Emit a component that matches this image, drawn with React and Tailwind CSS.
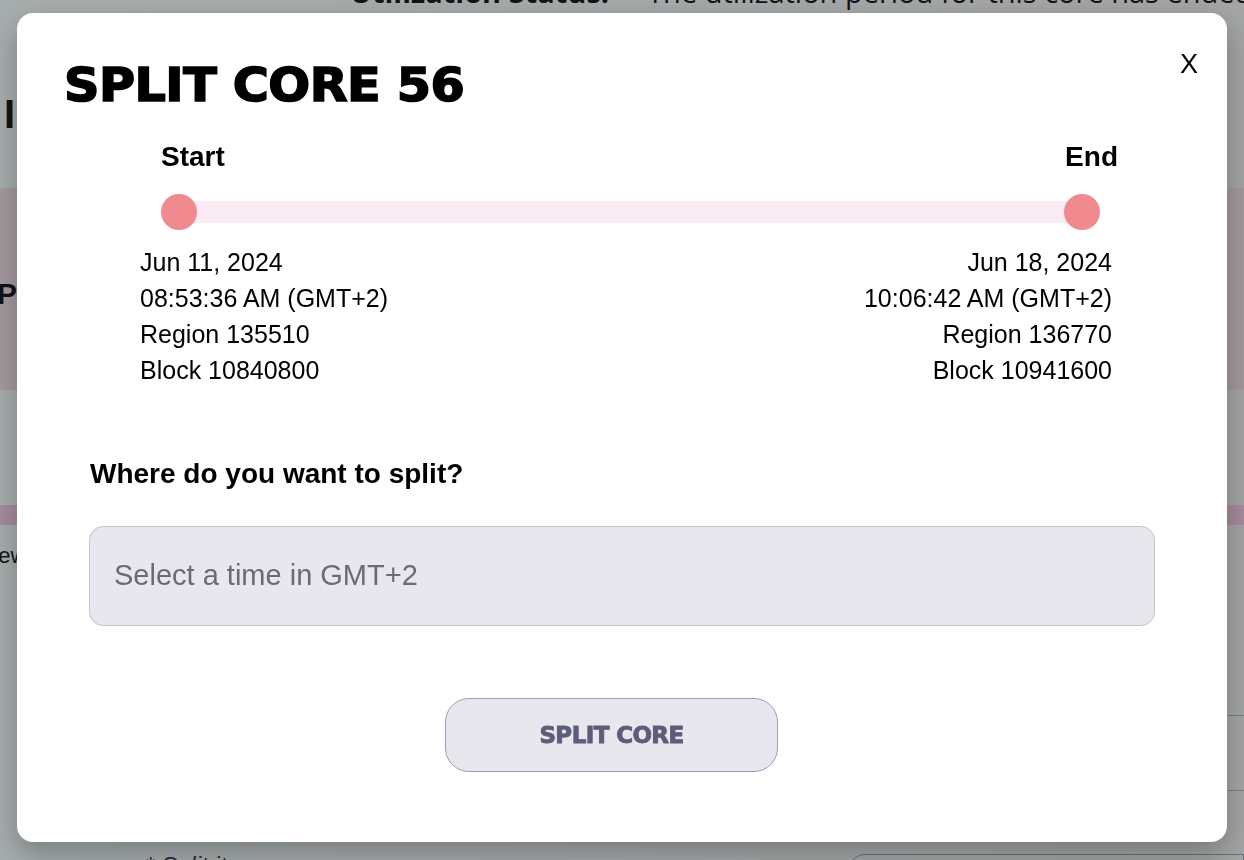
import React from 'react';

const startInfo = ['Jun 11, 2024', '08:53:36 AM (GMT+2)', 'Region 135510', 'Block 10840800'];
const endInfo = ['Jun 18, 2024', '10:06:42 AM (GMT+2)', 'Region 136770', 'Block 10941600'];

// --- dimmed page behind the dialog ---
const PageBehind = () => (
  <div className="h-screen w-full overflow-hidden bg-gradient-to-r from-[#a7aeae] to-[#a4a5a5] font-['Liberation_Sans',sans-serif] text-[#141414]">
    <div className="mt-[-19px] flex h-[32px] items-end gap-[38px] pl-[350px] whitespace-nowrap">
      <span className="font-['Open_Sans',sans-serif] text-[29px] font-bold">Utilization Status:</span>
      <span className="font-['Open_Sans',sans-serif] text-[29px]">The utilization period for this core has ended</span>
    </div>
    <div className="mt-[79px] h-[96px] pl-[4px] text-[40px] font-black leading-[44px]">I</div>
    <div className="flex h-[202px] items-center bg-[#a49a9f] text-[30px] font-black">
      <span className="-ml-[3px] mt-[8px]">P</span>
    </div>
    <div className="h-[115px]" />
    <div className="h-[20px] bg-[#a78c9d]" />
    <div className="mt-[18px] h-[25px] -ml-[14px] text-[22px] leading-[25px]">new</div>
    <div className="mt-[147px] ml-auto h-[76px] w-[40px] border-y border-[#7c7e8e]" />
    <div className="mt-[57px] flex items-start gap-[590px] pl-[145px]">
      <span className="text-[24px] italic text-[#2c2c3c]">* Split it up</span>
      <span className="mt-[6px] h-[40px] flex-1 rounded-tl-[14px] border border-[#6e6f86]" />
    </div>
  </div>
);

const Thumb = () => <div className="relative z-10 h-9 w-9 shrink-0 rounded-full bg-[#f08a8f]" />;

const InfoColumn = ({ lines, align }) => (
  <div className={align === 'right' ? 'text-right' : 'text-left'}>
    {lines.map(line => (
      <div key={line} className="h-9 text-[25px] leading-9 whitespace-nowrap">{line}</div>
    ))}
  </div>
);

export default function App() {
  return (
    <div className="relative">
      <PageBehind />

      {/* overlay + dialog */}
      <div className="fixed inset-0 pl-[17px] pt-[13px]">
        <div className="relative h-[829px] w-[1210px] rounded-[16px] bg-white pt-[49px] pb-[71px] font-['Liberation_Sans',sans-serif] text-black shadow-[0_12px_30px_rgba(0,0,0,0.28)]">
          <button className="absolute right-[29px] top-[38px] text-[27px] leading-none">X</button>

          <h2 className="origin-left scale-x-[1.07] pl-[44px] font-['DejaVu_Sans',sans-serif] text-[46px] font-bold leading-none tracking-[-0.5px] [-webkit-text-stroke:1.6px_black]">SPLIT CORE 56</h2>

          {/* range */}
          <div className="mt-[35px] ml-[144px] mr-[109px]">
            <div className="flex justify-between text-[28px] font-bold leading-none">
              <span>Start</span>
              <span>End</span>
            </div>
            <div className="mt-[23px] flex items-center pr-[18px]">
              <Thumb />
              <div className="-mx-[18px] h-[22px] flex-1 bg-[#fbebf5]" />
              <Thumb />
            </div>
          </div>

          <div className="mt-[14px] ml-[123px] mr-[115px] flex justify-between">
            <InfoColumn lines={startInfo} align="left" />
            <InfoColumn lines={endInfo} align="right" />
          </div>

          <div className="mx-[72px] mt-[72px]">
            <p className="pl-px text-[28px] font-bold leading-none">Where do you want to split?</p>
            <div className="mt-[38px] flex h-[100px] items-center rounded-[14px] border border-[#c4c3c9] bg-[#e8e7ed] pl-6">
              <span className="text-[29px] text-[#6c6b74]">Select a time in GMT+2</span>
            </div>
          </div>

          <div className="mt-[72px] pl-[428px]">
            <button className="flex h-[74px] w-[333px] items-center justify-center rounded-[24px] border border-[#9f9db4] bg-[#e8e7ee] font-['DejaVu_Sans',sans-serif] text-[23px] font-bold tracking-[-0.6px] text-[#5d5d7b] [-webkit-text-stroke:0.9px_#5d5d7b]">
              SPLIT CORE
            </button>
          </div>
        </div>
      </div>
    </div>
  );
}
